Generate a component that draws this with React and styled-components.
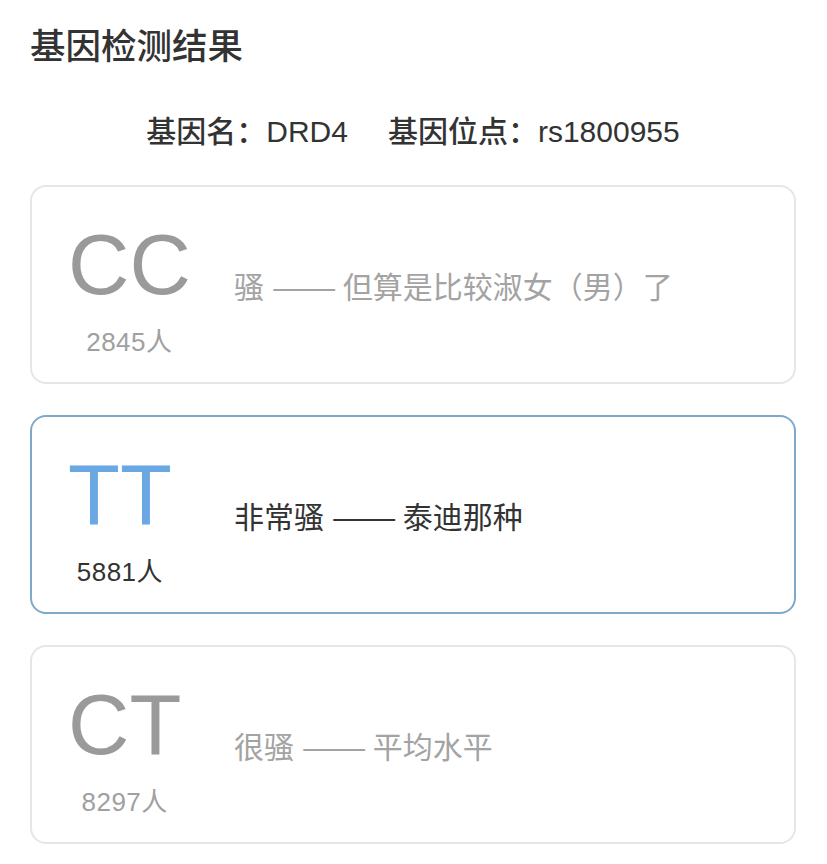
import styled, { createGlobalStyle } from "styled-components";

const GlobalStyle = createGlobalStyle`
  body {
    margin: 0;
    background: #ffffff;
    font-family: "Liberation Sans", "Noto Sans CJK SC", sans-serif;
  }
`;

const results = [
  { genotype: "CC", count: 2845, label: "骚", note: "但算是比较淑女（男）了", active: false },
  { genotype: "TT", count: 5881, label: "非常骚", note: "泰迪那种", active: true },
  { genotype: "CT", count: 8297, label: "很骚", note: "平均水平", active: false },
];

export default function App() {
  return (
    <>
      <GlobalStyle />
      <Page>
        <Title>基因检测结果</Title>
        <Info>
          <InfoItem>基因名：DRD4</InfoItem>
          <InfoItem>基因位点：rs1800955</InfoItem>
        </Info>
        <List>
          {results.map((r) => (
            <Card key={r.genotype} $active={r.active}>
              <LeftCell>
                <Stack>
                  <Genotype $active={r.active}>{r.genotype}</Genotype>
                  <Count $active={r.active}>{r.count}人</Count>
                </Stack>
              </LeftCell>
              <Desc $active={r.active}>
                {r.label} <Dash>——</Dash> {r.note}
              </Desc>
            </Card>
          ))}
        </List>
      </Page>
    </>
  );
}

const Page = styled.div`
  padding: 0 31px 20px 30px;
`;

const Title = styled.h1`
  margin: 0;
  padding-top: 22px;
  font-size: 35.5px;
  line-height: 44px;
  font-weight: 500;
  color: #333333;
  font-family: "Noto Sans CJK SC", sans-serif;
`;

const Info = styled.div`
  display: flex;
  justify-content: center;
  gap: 40px;
  margin-top: 46px;
  font-size: 30px;
  line-height: 40px;
  font-weight: 500;
  color: #333333;
`;

const InfoItem = styled.span``;

const List = styled.div`
  display: flex;
  flex-direction: column;
  gap: 31px;
  margin-top: 33px;
`;

const Card = styled.div`
  display: flex;
  align-items: center;
  height: 199px;
  box-sizing: border-box;
  padding: 0 20px 0 36px;
  border: 2px solid ${(p) => (p.$active ? "#7fa9c9" : "#e6e6e6")};
  border-radius: 16px;
  background: #ffffff;
`;

const LeftCell = styled.div`
  width: 166px;
  flex-shrink: 0;
  display: flex;
  padding-top: 8px;
`;

const Stack = styled.div`
  display: inline-flex;
  flex-direction: column;
  align-items: center;
`;

const Genotype = styled.div`
  font-size: 85px;
  line-height: 85px;
  color: ${(p) => (p.$active ? "#6aa8e4" : "#9a9a9a")};
`;

const Count = styled.div`
  margin-top: 22px;
  font-size: 26px;
  line-height: 26px;
  letter-spacing: 0.5px;
  color: ${(p) => (p.$active ? "#333333" : "#a0a0a0")};
`;

const Desc = styled.div`
  font-family: "Noto Sans CJK SC", sans-serif;
  font-size: 30px;
  line-height: 36px;
  color: ${(p) => (p.$active ? "#333333" : "#a3a3a3")};
  padding-top: 0;
  white-space: nowrap;
`;

const Dash = styled.span`
  display: inline-block;
  letter-spacing: -1px;
  transform: scaleX(1.3);
  margin: 0 8px;
`;
